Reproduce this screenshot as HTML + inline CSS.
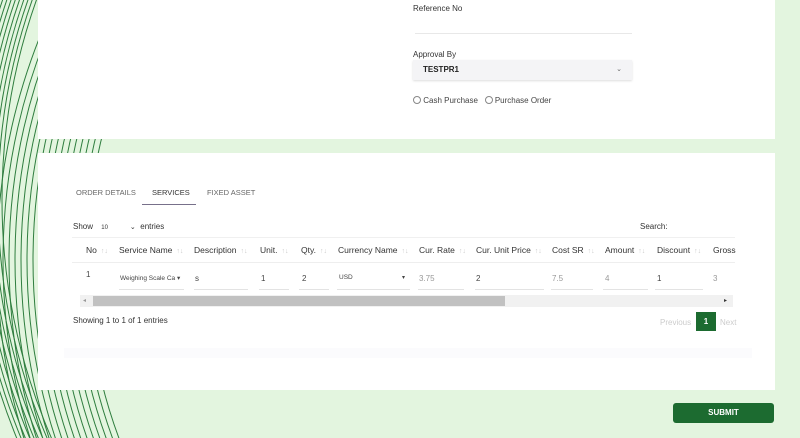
<!DOCTYPE html>
<html><head><meta charset="utf-8"><style>
*{box-sizing:border-box;margin:0;padding:0}
html,body{width:800px;height:438px;overflow:hidden}
body{background:#e3f5df;font-family:"Liberation Sans",sans-serif;position:relative;color:#333}
svg.bg{position:absolute;left:0;top:0}
.card{position:absolute;left:38px;width:737px;background:#fff}
.lbl{position:absolute;font-size:8px;color:#333}
.th{position:absolute;top:245px;font-size:8.5px;color:#333}
.th i{font-style:normal;color:#ccc;font-size:7px;margin-left:4px}
.td{position:absolute;top:274px;font-size:8px;color:#444}
.ul{position:absolute;top:289px;height:1px;background:#e3e3e3}
.rad{display:inline-block;width:8px;height:8px;border:1px solid #888;border-radius:50%;vertical-align:-1px}
</style></head><body>
<svg class="bg" width="800" height="438">
<g fill="none" stroke="#2e7d3e" stroke-width="1">
<circle cx="600" cy="260" r="513"/><circle cx="600" cy="260" r="519"/><circle cx="600" cy="260" r="525"/><circle cx="600" cy="260" r="531"/><circle cx="600" cy="260" r="537"/><circle cx="600" cy="260" r="543"/><circle cx="600" cy="260" r="549"/><circle cx="600" cy="260" r="555"/><circle cx="600" cy="260" r="561"/><circle cx="600" cy="260" r="567"/><circle cx="600" cy="260" r="573"/><circle cx="600" cy="260" r="579"/><circle cx="600" cy="260" r="585"/><circle cx="600" cy="260" r="591"/><circle cx="600" cy="260" r="597"/><circle cx="600" cy="260" r="603"/>
<circle cx="600" cy="200" r="598"/><circle cx="600" cy="200" r="602"/><circle cx="600" cy="200" r="606"/><circle cx="600" cy="200" r="610"/><circle cx="600" cy="200" r="614"/><circle cx="600" cy="200" r="618"/><circle cx="600" cy="200" r="622"/><circle cx="600" cy="200" r="626"/><circle cx="600" cy="200" r="630"/>
</g></svg>
<div class="card" style="top:0;height:139px"></div>
<div class="card" style="top:153px;height:237px"></div>
<div class="lbl" style="left:413px;top:4px">Reference No</div>
<div style="position:absolute;left:415px;top:33px;width:217px;height:1px;background:#e8e8e8"></div>
<div class="lbl" style="left:413px;top:50px">Approval By</div>
<div style="position:absolute;left:413px;top:60px;width:219px;height:20px;background:#f4f4f6;box-shadow:0 1px 2px #ddd;font-size:8px;font-weight:bold;padding:5px 10px;color:#222">TESTPR1<span style="position:absolute;right:10px;top:5px;font-weight:normal;color:#666;font-size:7px">⌄</span></div>
<div class="lbl" style="left:413px;top:96px;color:#444"><span class="rad"></span> Cash Purchase &nbsp;&nbsp;<span class="rad"></span> Purchase Order</div>
<div class="lbl" style="left:76px;top:188px;color:#666;font-size:7.5px">ORDER DETAILS</div>
<div class="lbl" style="left:152px;top:188px;color:#333;font-size:7.5px">SERVICES</div>
<div style="position:absolute;left:142px;top:204px;width:54px;height:1px;background:#77708a"></div>
<div class="lbl" style="left:207px;top:188px;color:#666;font-size:7.5px">FIXED ASSET</div>
<div class="lbl" style="left:73px;top:222px">Show <span style="font-size:6px;margin-left:6px">10</span><span style="margin-left:22px;font-size:7px">⌄</span> &nbsp;entries</div>
<div class="lbl" style="left:640px;top:222px">Search:</div>
<div style="position:absolute;left:72px;top:237px;width:663px;height:1px;background:#f0f0f0"></div>
<div class="th" style="left:86px">No<i>↑↓</i></div>
<div class="th" style="left:119px">Service Name<i>↑↓</i></div>
<div class="th" style="left:194px">Description<i>↑↓</i></div>
<div class="th" style="left:260px">Unit.<i>↑↓</i></div>
<div class="th" style="left:301px">Qty.<i>↑↓</i></div>
<div class="th" style="left:338px">Currency Name<i>↑↓</i></div>
<div class="th" style="left:419px">Cur. Rate<i>↑↓</i></div>
<div class="th" style="left:476px">Cur. Unit Price<i>↑↓</i></div>
<div class="th" style="left:552px">Cost SR<i>↑↓</i></div>
<div class="th" style="left:605px">Amount<i>↑↓</i></div>
<div class="th" style="left:657px">Discount<i>↑↓</i></div>
<div class="th" style="left:713px">Gross</div>
<div style="position:absolute;left:72px;top:262px;width:663px;height:1px;background:#eee"></div>
<div class="td" style="left:86px;top:270px">1</div>
<div class="td" style="left:120px;font-size:6.5px">Weighing Scale Ca ▾</div>
<div class="td" style="left:195px">s</div>
<div class="td" style="left:261px">1</div>
<div class="td" style="left:302px">2</div>
<div class="td" style="left:339px;font-size:6.5px">USD</div>
<div class="td" style="left:402px;font-size:6px">▾</div>
<div class="td" style="left:419px;color:#999">3.75</div>
<div class="td" style="left:476px">2</div>
<div class="td" style="left:552px;color:#999">7.5</div>
<div class="td" style="left:605px;color:#999">4</div>
<div class="td" style="left:657px">1</div>
<div class="td" style="left:713px;color:#999">3</div>
<div class="ul" style="left:119px;width:65px"></div><div class="ul" style="left:194px;width:54px"></div><div class="ul" style="left:259px;width:30px"></div><div class="ul" style="left:299px;width:30px"></div><div class="ul" style="left:337px;width:73px"></div><div class="ul" style="left:418px;width:46px"></div><div class="ul" style="left:475px;width:69px"></div><div class="ul" style="left:551px;width:42px"></div><div class="ul" style="left:603px;width:45px"></div><div class="ul" style="left:655px;width:48px"></div>
<div style="position:absolute;left:80px;top:295px;width:653px;height:12px;background:#f1f1f1"></div>
<div style="position:absolute;left:93px;top:296px;width:412px;height:10px;background:#c1c1c1"></div>
<div style="position:absolute;left:83px;top:297px;font-size:6px;color:#999">◂</div>
<div style="position:absolute;left:724px;top:297px;font-size:6px;color:#333">▸</div>
<div class="lbl" style="left:73px;top:316px">Showing 1 to 1 of 1 entries</div>
<div class="lbl" style="left:660px;top:318px;color:#ccc">Previous</div>
<div style="position:absolute;left:696px;top:312px;width:20px;height:19px;background:#1c6b30;color:#fff;font-size:8px;font-weight:bold;text-align:center;line-height:19px">1</div>
<div class="lbl" style="left:720px;top:318px;color:#ccc">Next</div>
<div style="position:absolute;left:64px;top:348px;width:688px;height:10px;background:#fbfbfd"></div>
<div style="position:absolute;left:673px;top:403px;width:101px;height:20px;background:#1c6b30;border-radius:3px;color:#fff;font-size:8px;font-weight:bold;text-align:center;line-height:20px">SUBMIT</div>
</body></html>
